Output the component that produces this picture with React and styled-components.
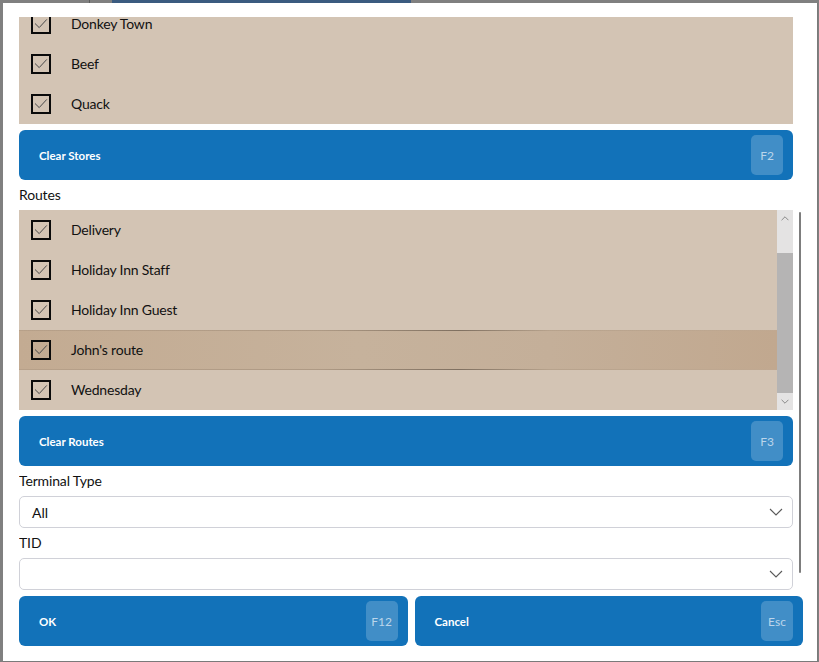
import React from "react";
import styled, { createGlobalStyle, css } from "styled-components";

const GlobalStyle = createGlobalStyle`
  html, body { margin: 0; padding: 0; }
  body {
    background: #808080;
    font-family: Lato, "Open Sans", "Noto Sans", sans-serif;
    -webkit-font-smoothing: antialiased;
  }
  * { box-sizing: border-box; }
`;

const Page = styled.div`
  position: relative;
  width: 819px;
  height: 662px;
  overflow: hidden;
  background: #808080;
`;

const AppHeader = styled.div`
  display: flex;
  height: 40px;
`;

const HeaderDivider = styled.div`
  width: 1px;
  margin-left: 89px;
  background: #5c5c5c;
`;

const HeaderTitle = styled.div`
  margin-left: 22px;
  width: 299px;
  background: #3b5b80;
  color: #d0d8e4;
  font-size: 14px;
  padding-left: 100px;
  padding-top: 2px;
`;

const Dialog = styled.div`
  position: absolute;
  top: 3px;
  left: 3px;
  width: 815px;
  height: 659px;
  background: #ffffff;
  border-right: 1px solid #7a7a7a;
  border-bottom: 1px solid #7a7a7a;
  display: flex;
  flex-direction: column;
  gap: 6px;
  padding: 14px 14px 15px 16px;
`;

const ScrollArea = styled.div`
  position: relative;
  flex: 1;
  min-height: 0;
  overflow: hidden;
  padding-right: 10px;
`;

const ScrollContent = styled.div`
  display: flex;
  flex-direction: column;
  gap: 6px;
`;

const OverlayThumb = styled.div`
  position: absolute;
  right: 2px;
  top: 195px;
  width: 2px;
  height: 361px;
  background: #7d7d7d;
  border-radius: 1px;
`;

const StoresList = styled.div`
  height: 107px;
  overflow: hidden;
  background: #d3c4b4;
  display: flex;
  flex-direction: column;
  justify-content: flex-end;
`;

const RoutesList = styled.div`
  height: 200px;
  display: flex;
  background: #d3c4b4;
`;

const RowsColumn = styled.div`
  flex: 1;
  display: flex;
  flex-direction: column;
  overflow: hidden;
`;

const RowText = styled.span`
  margin-top: -2px;
`;

const Row = styled.div`
  position: relative;
  flex-shrink: 0;
  height: 40px;
  display: flex;
  align-items: center;
  padding-left: 12px;
  gap: 20px;
  font-size: 14px;
  letter-spacing: -0.2px;
  color: #111111;
  ${(p) =>
    p.$selected &&
    css`
      background: linear-gradient(
        to right,
        #c3ab92 0%,
        #c6b29c 45%,
        #c4af99 70%,
        #c1a88f 100%
      );
      &::before,
      &::after {
        content: "";
        position: absolute;
        left: 0;
        right: 0;
        height: 1px;
        background: linear-gradient(
          to right,
          rgba(160, 140, 120, 0.35) 0%,
          rgba(150, 130, 110, 0.5) 40%,
          rgba(120, 105, 90, 0.9) 58%,
          rgba(170, 150, 128, 0.5) 70%,
          rgba(190, 170, 150, 0.3) 100%
        );
      }
      &::before { top: 0; }
      &::after { bottom: 0; }
    `}
`;

const CheckBox = styled.span`
  width: 20px;
  height: 20px;
  border: 2px solid #0a0a0a;
  display: flex;
  align-items: center;
  justify-content: center;
  flex-shrink: 0;
`;

const ListScrollbar = styled.div`
  width: 16px;
  display: flex;
  flex-direction: column;
  background: #e4e3e3;
`;

const ScrollArrow = styled.div`
  height: 17px;
  display: flex;
  align-items: center;
  justify-content: center;
  flex-shrink: 0;
`;

const ScrollTrack = styled.div`
  flex: 1;
  display: flex;
  flex-direction: column;
  justify-content: flex-end;
`;

const ScrollThumb = styled.div`
  height: 140px;
  background: #b5b4b4;
`;

const ActionButton = styled.div`
  height: 50px;
  border-radius: 6px;
  background: #1272b9;
  display: flex;
  align-items: center;
  justify-content: space-between;
  padding: 0 10px 0 20px;
  color: #ffffff;
  font-size: 11.5px;
  font-weight: 700;
`;

const KeyBadge = styled.span`
  width: 32px;
  height: 40px;
  border-radius: 5px;
  background: rgba(255, 255, 255, 0.2);
  color: rgba(235, 242, 250, 0.72);
  font-size: 12px;
  font-weight: 400;
  display: flex;
  align-items: center;
  justify-content: center;
`;

const FieldLabel = styled.div`
  height: 18px;
  line-height: 17px;
  font-size: 14px;
  letter-spacing: -0.15px;
  color: #111111;
`;

const Select = styled.div`
  height: 32px;
  border: 1px solid #d0d1d8;
  border-radius: 5px;
  display: flex;
  align-items: center;
  justify-content: space-between;
  padding: 0 9px 0 12px;
  font-size: 14px;
  color: #111111;
`;

const Footer = styled.div`
  display: grid;
  grid-template-columns: 1fr 1fr;
  gap: 7px;
`;

const CheckIcon = () => (
  <svg width="16" height="16" viewBox="0 0 16 16">
    <polyline
      points="2,7.5 6.2,11.6 13.8,3.4"
      fill="none"
      stroke="#4a4a4a"
      strokeWidth="1"
    />
  </svg>
);

const Chevron = ({ up, w = 14, h = 8, stroke = "#5a5a5a" }) => (
  <svg width={w} height={h} viewBox="0 0 14 8">
    <polyline
      points={up ? "1,7 7,1 13,7" : "1,1 7,7 13,1"}
      fill="none"
      stroke={stroke}
      strokeWidth="1.1"
    />
  </svg>
);

const CheckRow = ({ label, selected }) => (
  <Row $selected={selected}>
    <CheckBox>
      <CheckIcon />
    </CheckBox>
    <RowText>{label}</RowText>
  </Row>
);

const stores = ["Donkey Town", "Beef", "Quack"];
const routes = [
  "Delivery",
  "Holiday Inn Staff",
  "Holiday Inn Guest",
  "John's route",
  "Wednesday",
];

export default function App() {
  return (
    <Page>
      <GlobalStyle />
      <AppHeader>
        <HeaderDivider />
        <HeaderTitle>Not Ready Up to Date</HeaderTitle>
      </AppHeader>
      <Dialog>
        <ScrollArea>
          <ScrollContent>
            <StoresList>
              {stores.map((s) => (
                <CheckRow key={s} label={s} />
              ))}
            </StoresList>
            <ActionButton>
              Clear Stores
              <KeyBadge>F2</KeyBadge>
            </ActionButton>
            <FieldLabel>Routes</FieldLabel>
            <RoutesList>
              <RowsColumn>
                {routes.map((r) => (
                  <CheckRow key={r} label={r} selected={r === "John's route"} />
                ))}
              </RowsColumn>
              <ListScrollbar>
                <ScrollArrow>
                  <Chevron up w={8} h={5} stroke="#555555" />
                </ScrollArrow>
                <ScrollTrack>
                  <ScrollThumb />
                </ScrollTrack>
                <ScrollArrow>
                  <Chevron w={8} h={5} stroke="#555555" />
                </ScrollArrow>
              </ListScrollbar>
            </RoutesList>
            <ActionButton>
              Clear Routes
              <KeyBadge>F3</KeyBadge>
            </ActionButton>
            <FieldLabel>Terminal Type</FieldLabel>
            <Select>
              All
              <Chevron />
            </Select>
            <FieldLabel>TID</FieldLabel>
            <Select>
              <span />
              <Chevron />
            </Select>
          </ScrollContent>
          <OverlayThumb />
        </ScrollArea>
        <Footer>
          <ActionButton>
            OK
            <KeyBadge>F12</KeyBadge>
          </ActionButton>
          <ActionButton>
            Cancel
            <KeyBadge>Esc</KeyBadge>
          </ActionButton>
        </Footer>
      </Dialog>
    </Page>
  );
}
